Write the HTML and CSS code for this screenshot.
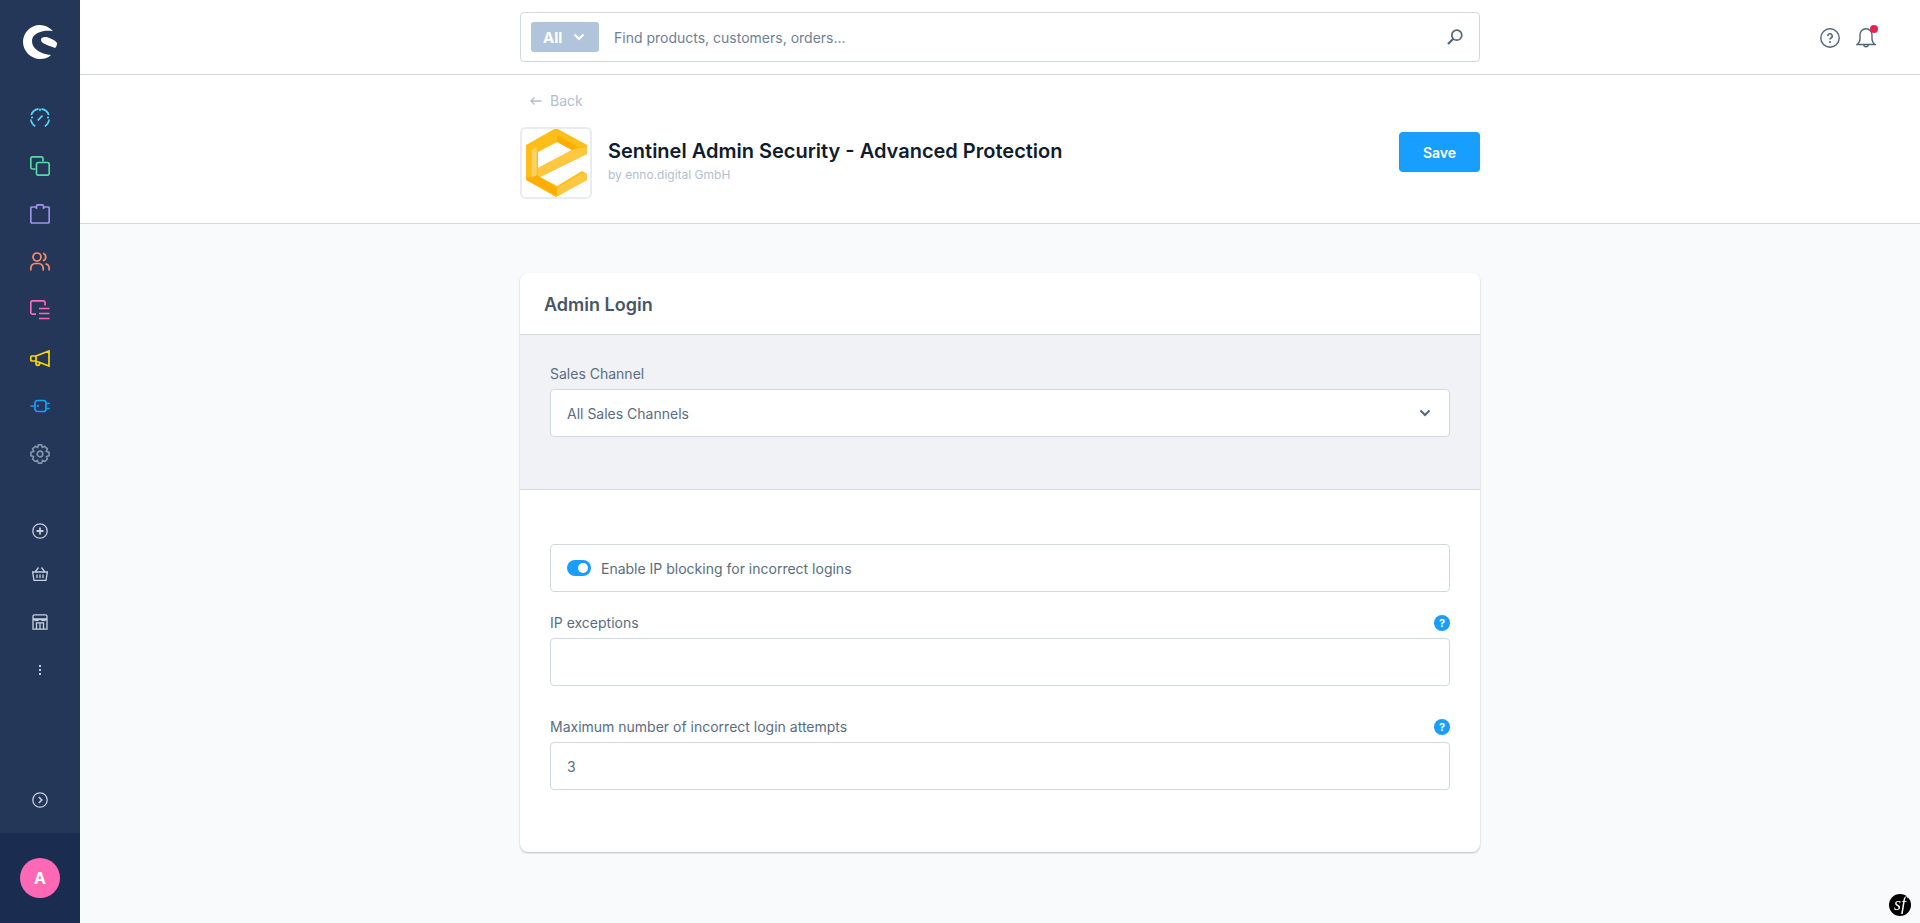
FILE: index.html
```html
<!DOCTYPE html>
<html lang="en">

<head>
    <meta charset="UTF-8">
    <meta name="viewport" content="width=device-width, initial-scale=1.0">
    <title>Sentinel Admin Security - Advanced Protection</title>
    <link rel="stylesheet" href="styles.css">
</head>

<body>
    <div class="app">
        <nav class="sidebar">
            <div class="sidebar_logo">
                <svg width="40" height="40" viewBox="20 22 40 40">
                    <path fill="#fff" d="M53 31C49 27 45 25 40 25C30 25 23 33 23 42C23 51 31 59 40 59C44 59 48 58 51 55C42 54 32 50 32 41C32 35 38 32 44 31C47 30.5 50 31 53 31Z" />
                    <path fill="#fff" d="M41 40C41 37 45 36.5 48 37.5C52 39 56 41 57 43C57 46 56 47 55 48C51 46 41 44 41 40Z" />
                </svg>
            </div>
            <ul class="nav_main">
                <li><svg class="nav_icon nav_dashboard" viewBox="0 0 20 20"><path d="M5.2 18.2A9.2 9.2 0 0 1 .9 11.5M1.2 7A9.2 9.2 0 0 1 8.5 .9M11.5 .9A9.2 9.2 0 0 1 18.8 7M19.1 11.5A9.2 9.2 0 0 1 14.8 18.2" /><path d="M10 .8V3M1 9.5H3M17 9.5H19M7.8 12.5L12.5 7.5" /></svg></li>
                <li><svg class="nav_icon nav_products" viewBox="0 0 20 20"><path d="M13 5.5V2.5A1.7 1.7 0 0 0 11.3 .8H2.5A1.7 1.7 0 0 0 .8 2.5v8.8A1.7 1.7 0 0 0 2.5 13H5.5" /><rect x="6.5" y="6.5" width="12.7" height="12.7" rx="1.8" /></svg></li>
                <li><svg class="nav_icon nav_orders" viewBox="0 0 20 20"><path d="M6.5 3H2A1.2 1.2 0 0 0 .8 4.2V17.8A1.2 1.2 0 0 0 2 19H18A1.2 1.2 0 0 0 19.2 17.8V4.2A1.2 1.2 0 0 0 18 3H13.5V2.2A1.4 1.4 0 0 0 12.1 .8H7.9A1.4 1.4 0 0 0 6.5 2.2V5M13.5 3V5" /></svg></li>
                <li><svg class="nav_icon nav_customers" viewBox="0 0 20 20"><circle cx="7" cy="5" r="4" /><path d="M.8 18.5V16A4.5 4.5 0 0 1 5.3 11.5H8.7A4.5 4.5 0 0 1 13.2 16V18.5M13 1.2A4 4 0 0 1 13 8.8M15.5 11.8A4.5 4.5 0 0 1 19.2 16V18.5" /></svg></li>
                <li><svg class="nav_icon nav_content" viewBox="0 0 20 20"><path d="M15 5.5V2.5A1.7 1.7 0 0 0 13.3 .8H2.5A1.7 1.7 0 0 0 .8 2.5V12.5A1.7 1.7 0 0 0 2.5 14.2H6" /><path d="M9 8.5H19.5M9 13.5H19.5M9 18.5H19.5" /></svg></li>
                <li><svg class="nav_icon nav_marketing" viewBox="0 0 20 20"><path d="M6 8H1.8A1 1 0 0 0 .8 9v3a1 1 0 0 0 1 1H6L19 18V3L6 8ZM6 8V13M6 13.5V15.5A1.8 1.8 0 0 0 9.6 15.5V14.5" /></svg></li>
                <li><svg class="nav_icon nav_extensions" viewBox="0 0 20 20"><rect x="5" y="4.5" width="11" height="11" rx="2.5" /><path d="M.5 10H5M15.5 7.5H19.8M15.5 12.5H19.8M8 8.8V11" /></svg></li>
                <li><svg class="nav_icon nav_settings" viewBox="0 0 20 20"><circle cx="10" cy="10" r="2.8" /><path d="M8.3 .9H11.7L12.3 3.5L14.7 2.3L17.4 4.9L16.2 7.4L19.1 8.2V11.8L16.4 12.6L17.4 15L14.9 17.5L12.4 16.4L11.7 19.1H8.3L7.5 16.4L5.1 17.5L2.6 15L3.6 12.6L.9 11.8V8.2L3.8 7.4L2.6 4.9L5.3 2.3L7.7 3.5Z" stroke-linejoin="round" /></svg></li>
            </ul>
            <ul class="nav_sub">
                <li><svg class="sub_icon" viewBox="0 0 16 16"><circle cx="8" cy="8" r="7.2" /><path d="M8 4.5V11.5M4.5 8H11.5" stroke-width="1.8" /></svg></li>
                <li class="nav_basket"><svg class="sub_icon" viewBox="0 0 16 16"><path d="M.6 6H15.4L14 14.4H2L.6 6ZM3.5 5.5L6.5 1.5M12.5 5.5L9.5 1.5M5 8.5V12M8 8.5V12M11 8.5V12" /></svg></li>
                <li><svg class="sub_icon" viewBox="0 0 16 16"><path d="M1 5V2.2A1.4 1.4 0 0 1 2.4 .8H13.6A1.4 1.4 0 0 1 15 2.2V5M1 5V15.2H15V5M1 5H15M1 5Q4.7 8 8 5Q11.3 8 15 5M4.5 15V8.8H11.5V15M8 8.8V15" /></svg></li>
                <li class="nav_dots"><span></span><span></span><span></span></li>
            </ul>
            <div class="sidebar_toggle">
                <svg class="sub_icon" viewBox="0 0 16 16"><circle cx="8" cy="8" r="7.2" /><path d="M6.8 5L9.8 8L6.8 11" stroke-width="1.6" /></svg>
            </div>
            <div class="sidebar_user">
                <div class="avatar">A</div>
            </div>
        </nav>

        <main class="content">
            <header class="topbar">
                <div class="search">
                    <div class="search_type">All
                        <svg width="12" height="12" viewBox="0 0 12 12"><path d="M1.5 3.5L6 8L10.5 3.5" fill="none" stroke="#fff" stroke-width="2.2" /></svg>
                    </div>
                    <div class="search_placeholder">Find products, customers, orders...</div>
                    <svg class="search_icon" width="16" height="16" viewBox="0 0 16 16"><circle cx="9.8" cy="6.2" r="5" /><path d="M6.3 9.7L1 15" stroke-width="2.2" /></svg>
                </div>
                <div class="topbar_icons">
                    <svg class="top_icon" viewBox="0 0 20 20"><circle cx="10" cy="10" r="9.2" /><path d="M7.8 8A2.2 2.2 0 1 1 10.9 10C10.2 10.4 10 10.7 10 11.5" stroke-width="1.6" /><circle class="icon_dot" cx="10" cy="14" r="1" /></svg>
                    <div class="bell">
                        <svg class="top_icon" viewBox="0 0 20 20"><path d="M10 .8A6 6 0 0 0 4 6.8V11C4 13.5 3 15 1 16.5H19C17 15 16 13.5 16 11V6.8A6 6 0 0 0 10 .8ZM7.8 16.5A2.2 2.2 0 0 0 12.2 16.5" /></svg>
                        <span class="bell_dot"></span>
                    </div>
                </div>
            </header>

            <section class="smart_bar">
                <div class="smart_inner">
                    <a class="back">
                        <svg width="12" height="10" viewBox="0 0 12 10"><path d="M11.5 5H1M4.5 1.5L1 5L4.5 8.5" fill="none" stroke="#b0bfce" stroke-width="1.3" /></svg>
                        Back
                    </a>
                    <div class="plugin_row">
                        <div class="plugin_logo">
                            <svg width="68" height="68" viewBox="2 2 68 68">
                                <path fill="#ffbe17" fill-rule="evenodd" d="M36 1L67 18V27L20 50L37 59L62 44L67 47V53L36 70L6 53V18ZM18 25V41L52 23L37 15Z" />
                                <path fill="#ffad00" d="M37 8L58 20L52 23L37 15Z" />
                                <path fill="#ffad00" d="M6.7 51L16.7 48L37 61V69L6.7 53Z" />
                                <path fill="#ffd264" d="M11.7 23L16.7 20V48L11.7 51Z" />
                                <path fill="#ffc840" d="M18 41L52 23L67 20V27L20 50L18 48Z" />
                                <path fill="#ffc840" d="M37 61L62 46L67 47V53L37 69Z" />
                            </svg>
                        </div>
                        <div class="plugin_meta">
                            <h1>Sentinel Admin Security - Advanced Protection</h1>
                            <p>by enno.digital GmbH</p>
                        </div>
                        <button class="save_button">Save</button>
                    </div>
                </div>
            </section>

            <section class="page_body">
                <article class="card">
                    <h2 class="card_title">Admin Login</h2>
                    <div class="card_toolbar">
                        <label class="field_label">Sales Channel</label>
                        <div class="field_box field_select">
                            All Sales Channels
                            <svg width="12" height="12" viewBox="0 0 12 12"><path d="M1.5 3.5L6 8L10.5 3.5" fill="none" stroke="#52667a" stroke-width="2" /></svg>
                        </div>
                    </div>
                    <div class="card_body">
                        <div class="field_box field_switch">
                            <span class="switch"><span class="switch_knob"></span></span>
                            Enable IP blocking for incorrect logins
                        </div>
                        <div class="field_head">
                            <label class="field_label">IP exceptions</label>
                            <span class="help">?</span>
                        </div>
                        <div class="field_box"></div>
                        <div class="field_head field_gap">
                            <label class="field_label">Maximum number of incorrect login attempts</label>
                            <span class="help">?</span>
                        </div>
                        <div class="field_box">3</div>
                    </div>
                </article>
            </section>
        </main>
    </div>

    <div class="sf_badge">sf</div>
</body>

</html>
```

FILE: styles.css
```css
* {
    box-sizing: border-box;
}

html,
body {
    height: 100%;
}

body {
    margin: 0;
    overflow: hidden;
    font-family: "Inter", "Liberation Sans", sans-serif;
    font-size: 14px;
    color: #5a6d80;
    background-color: #f9fafb;
}

ul {
    list-style: none;
    margin: 0;
    padding: 0;
}

.app {
    display: flex;
    height: 100%;
}

/* sidebar */
.sidebar {
    width: 80px;
    flex-shrink: 0;
    display: flex;
    flex-direction: column;
    background-color: #243758;
}

.sidebar_logo {
    height: 84px;
    padding: 22px 20px 0;
}

.nav_main li,
.nav_sub li {
    display: flex;
    align-items: center;
    justify-content: center;
    height: 48px;
}

.nav_main {
    margin-top: 10px;
}

.nav_sub {
    margin-top: 29px;
}

.nav_sub .nav_basket {
    height: 38px;
    margin-bottom: 5px;
}

.nav_icon {
    width: 20px;
    height: 20px;
    fill: none;
    stroke-width: 1.7;
}

.nav_dashboard {
    stroke: #57d9ff;
}

.nav_products {
    stroke: #57d9a3;
}

.nav_orders {
    stroke: #a092f0;
}

.nav_customers {
    stroke: #ff8b66;
}

.nav_content {
    stroke: #ff68b4;
}

.nav_marketing {
    stroke: #ffd700;
}

.nav_extensions {
    stroke: #189eff;
}

.nav_settings {
    stroke: #8295a8;
}

.sub_icon {
    width: 16px;
    height: 16px;
    fill: none;
    stroke: #c4d1de;
    stroke-width: 1.3;
}

.nav_dots {
    flex-direction: column;
    gap: 2px;
}

.nav_dots span {
    width: 2px;
    height: 2px;
    background-color: #c4d1de;
}

.sidebar_toggle {
    margin-top: auto;
    height: 73px;
    display: flex;
    align-items: flex-start;
    justify-content: center;
    padding-top: 32px;
}

.sidebar_user {
    height: 90px;
    padding-top: 25px;
    background-color: #1a2c4f;
}

.avatar {
    width: 40px;
    height: 40px;
    margin: 0 auto;
    border-radius: 50%;
    background-color: #ff68b4;
    color: #fff;
    font-size: 16px;
    font-weight: 700;
    line-height: 40px;
    text-align: center;
}

/* top bar */
.content {
    flex: 1;
    min-width: 0;
}

.topbar {
    position: relative;
    height: 75px;
    padding-top: 12px;
    background-color: #fff;
    border-bottom: 1px solid #d1d9e0;
}

.search {
    width: 960px;
    height: 50px;
    margin-left: 440px;
    padding: 0 16px 0 10px;
    display: flex;
    align-items: center;
    background-color: #fff;
    border: 1px solid #d1d9e0;
    border-radius: 4px;
}

.search_type {
    width: 68px;
    height: 30px;
    padding-left: 12px;
    display: flex;
    align-items: center;
    gap: 11px;
    background-color: #b0c5db;
    border-radius: 3px;
    color: #fff;
    font-size: 15px;
    font-weight: 700;
}

.search_placeholder {
    margin-left: 15px;
    flex: 1;
    color: #6f8193;
}

.search_icon {
    fill: none;
    stroke: #52667a;
    stroke-width: 1.7;
}

.topbar_icons {
    position: absolute;
    top: 28px;
    right: 44px;
    display: flex;
    gap: 16px;
}

.top_icon {
    display: block;
    width: 20px;
    height: 20px;
    fill: none;
    stroke: #52667a;
    stroke-width: 1.4;
}

.icon_dot {
    fill: #52667a;
    stroke: none;
}

.bell {
    position: relative;
}

.bell_dot {
    position: absolute;
    top: -3px;
    right: -2px;
    width: 8px;
    height: 8px;
    border-radius: 50%;
    background-color: #e52350;
}

/* plugin header */
.smart_bar {
    height: 149px;
    background-color: #fff;
    border-bottom: 1px solid #d1d9e0;
}

.smart_inner {
    width: 960px;
    margin-left: 440px;
    padding-top: 17px;
}

.back {
    display: flex;
    align-items: center;
    gap: 8px;
    height: 17px;
    padding-left: 10px;
    color: #b0bfce;
}

.plugin_row {
    display: flex;
    align-items: center;
    margin-top: 18px;
}

.plugin_logo {
    width: 72px;
    height: 72px;
    display: flex;
    align-items: center;
    justify-content: center;
    border: 2px solid #e9ecef;
    border-radius: 6px;
    background-color: #fff;
}

.plugin_meta {
    flex: 1;
    margin-left: 16px;
    margin-bottom: 5px;
}

.plugin_meta h1 {
    margin: 0;
    font-size: 20px;
    font-weight: 600;
    line-height: 24px;
    color: #0f1c2e;
}

.plugin_meta p {
    margin: 4px 0 0;
    font-size: 12px;
    line-height: 15px;
    color: #b0bfce;
}

.save_button {
    width: 81px;
    height: 40px;
    margin-bottom: 22px;
    border: 0;
    border-radius: 4px;
    background-color: #189eff;
    color: #fff;
    font-family: inherit;
    font-size: 14px;
    font-weight: 600;
}

/* card */
.page_body {
    width: 960px;
    margin-left: 440px;
    padding-top: 49px;
}

.card {
    height: 579px;
    background-color: #fff;
    border-radius: 8px;
    box-shadow: 0 1px 2px rgba(0, 0, 0, 0.25);
}

.card_title {
    margin: 0;
    height: 62px;
    padding-left: 24px;
    font-size: 18px;
    font-weight: 600;
    line-height: 63px;
    color: #465668;
    border-bottom: 1px solid #d1d9e0;
}

.card_toolbar {
    height: 155px;
    padding: 30px 30px 0;
    background-color: #f0f2f5;
    border-bottom: 1px solid #d1d9e0;
}

.card_body {
    padding: 54px 30px 0;
}

.field_label {
    display: block;
    height: 24px;
    line-height: 17px;
}

.field_box {
    height: 48px;
    padding: 0 16px;
    display: flex;
    align-items: center;
    background-color: #fff;
    border: 1px solid #d1d9e0;
    border-radius: 4px;
}

.field_select {
    justify-content: space-between;
    padding-right: 18px;
}

.field_switch {
    margin-bottom: 22px;
    gap: 10px;
}

.field_head {
    display: flex;
    justify-content: space-between;
}

.field_gap {
    margin-top: 32px;
}

.switch {
    position: relative;
    width: 24px;
    height: 16px;
    border-radius: 8px;
    background-color: #189eff;
}

.switch_knob {
    position: absolute;
    top: 3px;
    right: 3px;
    width: 10px;
    height: 10px;
    border-radius: 50%;
    background-color: #fff;
}

.help {
    width: 16px;
    height: 16px;
    margin-top: 1px;
    border-radius: 50%;
    background-color: #189eff;
    color: #fff;
    font-size: 11px;
    font-weight: 700;
    line-height: 16px;
    text-align: center;
}

/* symfony toolbar button */
.sf_badge {
    position: fixed;
    right: 9px;
    bottom: 7px;
    width: 22px;
    height: 22px;
    border-radius: 50%;
    background-color: #000;
    color: #fff;
    font-family: "Liberation Serif", serif;
    font-size: 18px;
    font-style: italic;
    line-height: 20px;
    text-align: center;
}
```
